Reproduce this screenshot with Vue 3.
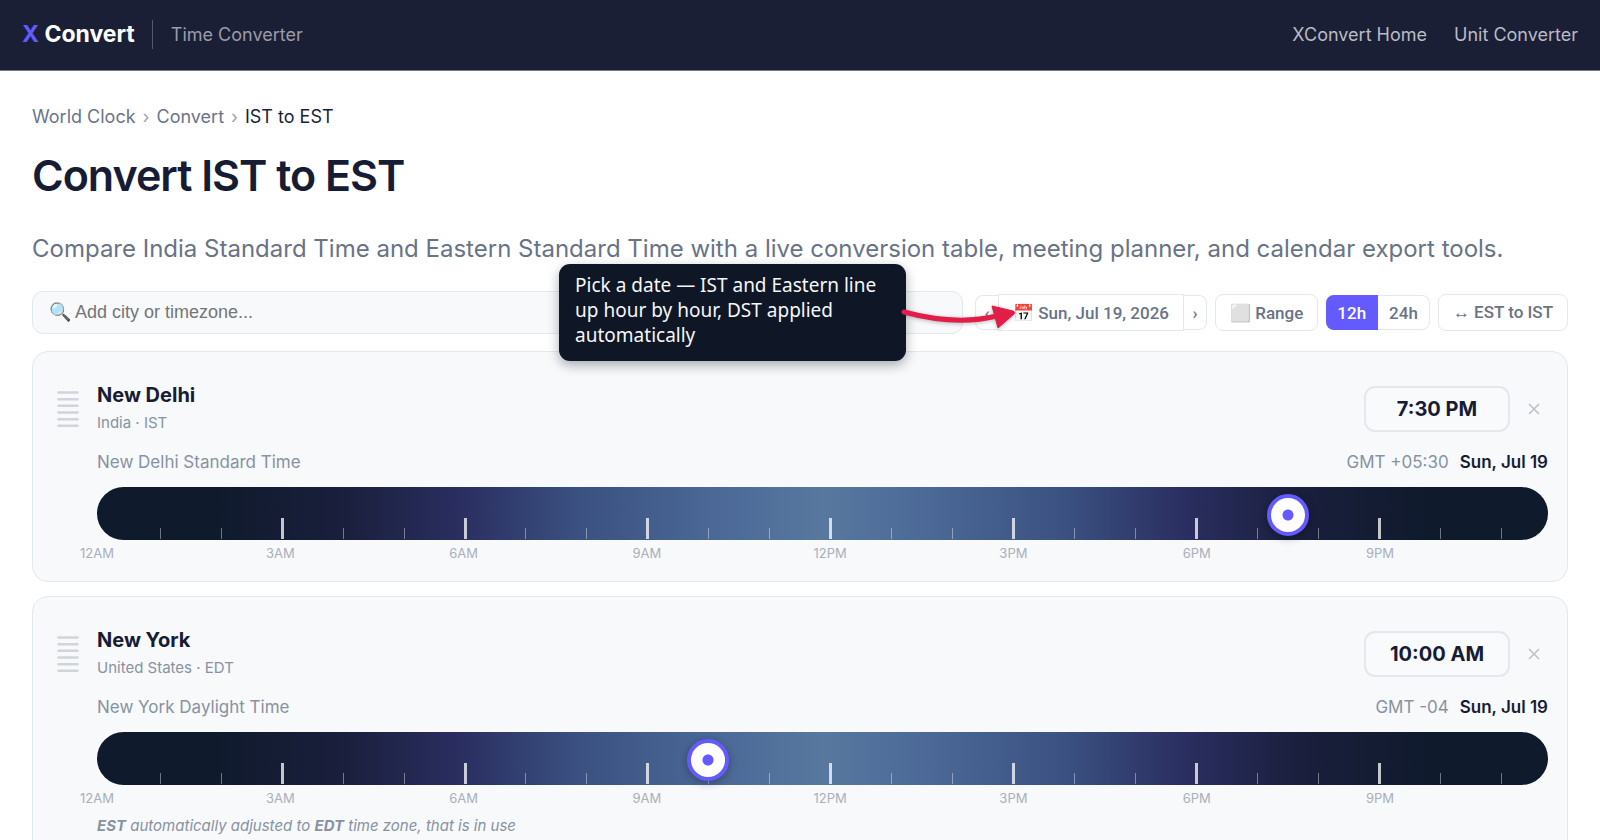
<template>
  <div class="page">
    <!-- Top Navigation -->
    <header class="navbar">
      <a href="#" class="brand"><span class="brand-x">X</span> Convert</a>
      <span class="brand-section">Time Converter</span>
      <nav class="nav-links">
        <a href="#">XConvert Home</a>
        <a href="#">Unit Converter</a>
      </nav>
    </header>

    <main class="content">
      <nav class="breadcrumb" aria-label="Breadcrumb">
        <a href="#">World Clock</a>
        <span class="crumb-sep">›</span>
        <a href="#">Convert</a>
        <span class="crumb-sep">›</span>
        <span class="crumb-current">IST to EST</span>
      </nav>

      <h1 class="main-title">Convert IST to EST</h1>
      <p class="sub-title">
        Compare India Standard Time and Eastern Standard Time with a live conversion table, meeting planner, and calendar export tools.
      </p>

      <!-- Toolbar -->
      <div class="toolbar">
        <input
          v-model="query"
          class="search-input"
          type="text"
          aria-label="Add city or timezone"
          placeholder="🔍 Add city or timezone..."
        />
        <div class="date-group">
          <button class="step-btn prev" type="button" aria-label="Previous day">‹</button>
          <button class="tool-btn date-btn" type="button">📅 Sun, Jul 19, 2026</button>
          <button class="step-btn next" type="button" aria-label="Next day">›</button>

          <div class="hint">Pick a date — IST and Eastern line up hour by hour, DST applied automatically</div>
          <svg class="hint-arrow" viewBox="0 0 120 40" width="120" height="40" aria-hidden="true">
            <path d="M5 13 Q57 27 98 17" fill="none" stroke="#e11d48" stroke-width="5" stroke-linecap="round" />
            <path d="M93 7 L114 12 Q117 13 115 15 L99 29 Z" fill="#e11d48" stroke="#e11d48" stroke-width="1" stroke-linejoin="round" />
          </svg>
        </div>
        <button class="tool-btn" type="button">⬜ Range</button>
        <div class="format-group">
          <button
            v-for="option in ['12h', '24h']"
            :key="option"
            type="button"
            class="format-btn"
            :class="{ 'is-active': format === option }"
            @click="format = option"
          >{{ option }}</button>
        </div>
        <button class="tool-btn" type="button">↔ EST to IST</button>
      </div>

      <!-- City Cards -->
      <section v-for="city in cities" :key="city.name" class="city-card">
        <div class="city-header">
          <svg class="drag-handle" viewBox="0 0 22 38" width="22" height="38" aria-hidden="true">
            <path
              d="M1.500 2.500H20.500M1.500 9.200H20.500M1.500 15.800H20.500M1.500 22.500H20.500M1.500 29.200H20.500M1.500 35.800H20.500"
              stroke="#d1d4da"
              stroke-width="2.600"
              stroke-linecap="round"
            />
          </svg>
          <div class="city-info">
            <h2 class="city-name">{{ city.name }}</h2>
            <div class="city-region">{{ city.region }}</div>
          </div>
          <input v-model="city.time" class="time-input" type="text" :aria-label="`${city.name} time`" />
          <button class="remove-btn" type="button" :aria-label="`Remove ${city.name}`">
            <svg viewBox="0 0 12 12" width="12" height="12" fill="none" stroke="currentColor" stroke-width="1.600">
              <path d="M1 1L11 11M11 1L1 11" />
            </svg>
          </button>
        </div>

        <div class="city-body">
          <div class="zone-row">
            <span class="zone-name">{{ city.zone }}</span>
            <span class="zone-offset">{{ city.offset }}</span>
            <span class="zone-date">Sun, Jul 19</span>
          </div>

          <div class="timeline">
            <span
              v-for="hour in 23"
              :key="hour"
              class="tick"
              :class="{ 'is-major': hour % 3 === 0 }"
              :style="{ left: tickPosition(hour) }"
            ></span>
            <input
              v-model.number="city.hour"
              class="slider"
              type="range"
              min="0"
              :max="LAST_HOUR"
              step="0.25"
              :aria-label="`${city.name} hour of day`"
            />
          </div>

          <div class="hour-labels">
            <span
              v-for="(label, idx) in hourLabels"
              :key="label"
              class="hour-label"
              :style="{ left: hourPosition(idx * 3) }"
            >{{ label }}</span>
          </div>

          <p v-if="city.adjusted" class="zone-note"><b>EST</b> automatically adjusted to <b>EDT</b> time zone, that is in use</p>
        </div>
      </section>
    </main>
  </div>
</template>

<script setup>
import { ref } from 'vue'

// The slider moves in quarter hours and stops at 11:45 PM
const LAST_HOUR = 23.75

const query = ref('')
const format = ref('12h')

const cities = ref([
  {
    name: 'New Delhi',
    region: 'India · IST',
    zone: 'New Delhi Standard Time',
    offset: 'GMT +05:30',
    time: '7:30 PM',
    hour: 19.5,
    adjusted: false
  },
  {
    name: 'New York',
    region: 'United States · EDT',
    zone: 'New York Daylight Time',
    offset: 'GMT -04',
    time: '10:00 AM',
    hour: 10,
    adjusted: true
  }
])

const hourLabels = ['12AM', '3AM', '6AM', '9AM', '12PM', '3PM', '6PM', '9PM']

const hourPosition = (hour) => `${(hour / LAST_HOUR) * 100}%`
const tickPosition = (hour) => `${0.2 + hour * 4.2}%`
</script>

<style>
body {
  background: #ffffff;
}
</style>

<style scoped>
.page {
  font-family: Inter, 'Liberation Sans', sans-serif;
  color: #171c35;
}

.page * {
  box-sizing: border-box;
}

a {
  color: inherit;
  text-decoration: none;
}

button {
  cursor: pointer;
}

/* Top Navigation */
.navbar {
  display: flex;
  align-items: center;
  height: 71px;
  padding: 0 22px 2px;
  background: #1a1f36;
  border-bottom: 1px solid #76798a;
}

.brand {
  font-size: 23px;
  font-weight: 700;
  line-height: 30px;
  color: #ffffff;
}

.brand-x {
  color: #635bff;
}

.brand-section {
  margin-left: 17px;
  padding-left: 18px;
  border-left: 1px solid #56596d;
  font-size: 18px;
  line-height: 29px;
  color: #9a9ba8;
}

.nav-links {
  display: flex;
  gap: 27px;
  margin-left: auto;
  font-size: 18px;
  color: #b9bbc5;
}

/* Page Intro */
.content {
  padding: 33px 32px 32px;
}

.breadcrumb {
  display: flex;
  gap: 7px;
  font-size: 18px;
  line-height: 26px;
  color: #6b7489;
}

.crumb-sep {
  color: #9ba3b3;
}

.crumb-current {
  color: #1a1f36;
}

.main-title {
  margin: 19px 0 0;
  font-size: 43px;
  font-weight: 600;
  line-height: 52px;
  letter-spacing: -1px;
}

.sub-title {
  margin: 30px 0 0;
  font-size: 24px;
  line-height: 36px;
  color: #697386;
}

/* Toolbar */
.toolbar {
  display: flex;
  align-items: center;
  gap: 8px;
  margin: 24px 0 17px;
}

.search-input {
  flex: 1;
  min-width: 0;
  height: 43px;
  margin-right: 4px;
  padding: 0 16px;
  background: #f7f9fb;
  border: 1px solid #e3e8ee;
  border-radius: 11px;
  font-family: 'Liberation Sans', sans-serif;
  font-size: 18px;
}

.search-input::placeholder {
  color: #757575;
}

.tool-btn,
.step-btn,
.format-btn {
  background: #ffffff;
  border: 1px solid #e3e8ee;
  font-family: Roboto, sans-serif;
  font-size: 17px;
  font-weight: 500;
  color: #697386;
  white-space: nowrap;
}

.tool-btn {
  height: 37px;
  padding: 0 14px;
  border-radius: 8px;
}

.date-group {
  position: relative;
  display: flex;
  align-items: center;
}

.date-group .date-btn {
  border-radius: 0;
}

.step-btn {
  width: 23px;
  height: 35px;
  padding: 0;
}

.step-btn.prev {
  border-right: none;
  border-radius: 8px 0 0 8px;
}

.step-btn.next {
  border-left: none;
  border-radius: 0 8px 8px 0;
}

.format-group {
  display: flex;
}

.format-btn {
  height: 35px;
  padding: 0 11px;
  border-left: none;
  border-radius: 0 8px 8px 0;
}

.format-btn:first-child {
  border-radius: 8px 0 0 8px;
}

.format-btn.is-active {
  background: #635bff;
  border-color: #635bff;
  color: #ffffff;
}

/* Date Hint */
.hint {
  position: absolute;
  top: -30px;
  right: calc(100% + 69px);
  z-index: 2;
  width: 347px;
  padding: 9px 16px 13px;
  background: #0f1626;
  border-radius: 11px;
  box-shadow: 0 4px 12px rgba(15, 22, 38, 0.35);
  font-family: 'Noto Sans', sans-serif;
  font-size: 19px;
  line-height: 25px;
  color: #f5f6f8;
}

.hint-arrow {
  position: absolute;
  top: 5px;
  left: -76px;
  z-index: 3;
  filter: drop-shadow(0 1px 2px rgba(15, 22, 38, 0.3));
}

/* City Cards */
.city-card {
  margin-bottom: 14px;
  padding: 30px 19px 19px 24px;
  background: #f7f9fb;
  border: 1px solid #e3e8ee;
  border-radius: 16px;
}

.city-header {
  display: flex;
  align-items: center;
}

.drag-handle {
  flex-shrink: 0;
}

.city-info {
  flex: 1;
  margin-left: 18px;
}

.city-name {
  margin: 0;
  font-size: 20px;
  font-weight: 700;
  line-height: 27px;
}

.city-region {
  font-size: 15px;
  line-height: 27px;
  color: #8792a2;
}

.time-input {
  width: 146px;
  height: 46px;
  padding: 0;
  background: #f9fafc;
  border: 2px solid #e3e8ee;
  border-radius: 11px;
  font-family: inherit;
  font-size: 20px;
  font-weight: 700;
  text-align: center;
  color: #171c35;
}

.remove-btn {
  display: flex;
  align-items: center;
  justify-content: center;
  width: 28px;
  height: 28px;
  margin-left: 10px;
  padding: 0;
  background: none;
  border: none;
  color: #bcc1cb;
}

.city-body {
  padding-left: 40px;
}

.zone-row {
  display: flex;
  align-items: center;
  gap: 11px;
  margin: 15px 0 14px;
  font-size: 17px;
  line-height: 22px;
  color: #8792a2;
}

.zone-name {
  flex: 1;
}

.zone-date {
  font-weight: 600;
  color: #171c35;
}

/* Timeline */
.timeline {
  position: relative;
  height: 53px;
  border-radius: 27px;
  background: linear-gradient(
    90deg,
    #0f1a2c 0%,
    #0f1a2c 8%,
    #1a1f3c 17%,
    #2a2e60 25%,
    #3a5080 33%,
    #4a6796 42%,
    #58789f 50%,
    #4a6796 58%,
    #3a5080 67%,
    #2a2e60 75%,
    #1a1f3c 83%,
    #0f1a2c 92%,
    #0f1a2c 100%
  );
}

.tick {
  position: absolute;
  bottom: 1px;
  width: 1px;
  height: 11px;
  margin-left: -1px;
  background: rgba(255, 255, 255, 0.4);
}

.tick.is-major {
  width: 3px;
  height: 21px;
  margin-left: -2px;
  background: rgba(255, 255, 255, 0.75);
}

/* Widened by half a thumb per side so the thumb centre lands on the hour */
.slider {
  position: absolute;
  top: 0;
  left: -21px;
  width: calc(100% + 42px);
  height: 56px;
  margin: 0;
  appearance: none;
  background: transparent;
}

.slider::-webkit-slider-thumb {
  appearance: none;
  box-sizing: border-box;
  width: 42px;
  height: 42px;
  border: 4px solid #635bff;
  border-radius: 50%;
  background: radial-gradient(circle, #635bff 5px, #ffffff 6px);
  background-origin: border-box;
  box-shadow: 0 2px 8px rgba(0, 0, 0, 0.3);
  cursor: grab;
}

.hour-labels {
  position: relative;
  height: 22px;
}

.hour-label {
  position: absolute;
  top: 4px;
  transform: translateX(-50%);
  font-size: 13px;
  line-height: 18px;
  color: #a9afbc;
}

.zone-note {
  margin: 8px 0 0;
  font-size: 15px;
  font-style: italic;
  line-height: 22px;
  color: #8792a2;
}
</style>
